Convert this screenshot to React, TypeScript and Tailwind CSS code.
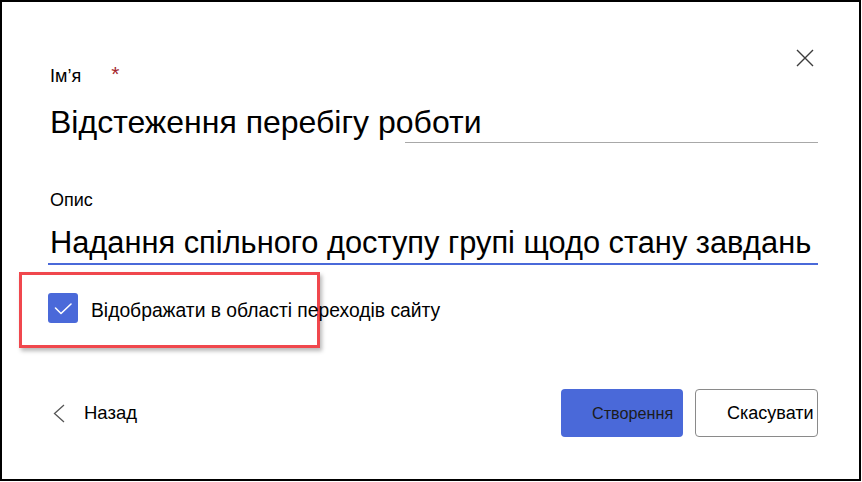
import React from "react";

export default function App() {
  return (
    <div
      className="w-[861px] h-[481px] border-2 border-black bg-white text-black overflow-hidden"
      style={{ fontFamily: '"Liberation Sans", Arial, sans-serif' }}
    >
      <div className="flex flex-col pl-[48px] pr-[41px]">
        {/* Header row: label + close */}
        <div className="flex justify-between pt-[47px]">
          <div className="mt-[16px] flex items-start text-[18px] leading-[22px]">
            <span>Ім’я</span>
            <span className="ml-[30px] text-[#a4262c] text-[21px] leading-[21px] -mt-[2px]">*</span>
          </div>
          <button className="w-[18px] h-[18px] mr-[4px]" aria-label="Закрити">
            <svg width="18" height="18" viewBox="0 0 18 18" fill="none">
              <path d="M1 1L17 17M17 1L1 17" stroke="#3c3c3c" strokeWidth="1.4" />
            </svg>
          </button>
        </div>

        {/* Name input */}
        <div className="flex flex-col mt-[16px]">
          <div className="text-[32px] leading-[39px] h-[39px] whitespace-nowrap">
            Відстеження перебігу роботи
          </div>
          <div className="ml-[355px] h-px bg-[#a8a8a8]" />
        </div>

        {/* Description label */}
        <div className="mt-[46px] text-[18px] leading-[22px]">Опис</div>

        {/* Description input */}
        <div className="mt-[12px] -ml-[2px] pl-[2px] border-b-2 border-[#4a69d9]">
          <div className="text-[30.8px] leading-[40px] h-[40px] whitespace-nowrap">
            Надання спільного доступу групі щодо стану завдань
          </div>
        </div>

        {/* Highlighted checkbox row */}
        <div className="mt-[7px] -ml-[31px] w-[301px] h-[76px] border-[3px] border-[#f0474d] shadow-[2px_3px_4px_rgba(0,0,0,0.28)] pl-[26px] pt-[18px]">
          <div className="flex items-start whitespace-nowrap">
            <div className="w-[30px] h-[30px] rounded-[3px] bg-[#4a69d9] flex items-center justify-center shrink-0">
              <svg width="30" height="30" viewBox="0 0 30 30" fill="none">
                <path d="M7.5 15L13 20.5L23 11" stroke="#ffffff" strokeWidth="1.6" strokeLinecap="round" strokeLinejoin="round" />
              </svg>
            </div>
            <span className="ml-[13px] mt-[6px] text-[19.3px] leading-[24px]">Відображати в області переходів сайту</span>
          </div>
        </div>

        {/* Footer */}
        <div className="mt-[41px] flex items-center justify-between">
          <button className="flex items-center">
            <svg width="12" height="19" viewBox="0 0 12 19" fill="none" className="ml-[3px]">
              <path d="M11 1L1.5 9.5L11 18" stroke="#555555" strokeWidth="1.3" />
            </svg>
            <span className="ml-[19px] text-[18.5px] leading-[22px]">Назад</span>
          </button>
          <div className="flex items-center gap-[12px]">
            <button className="w-[122px] h-[48px] rounded-[4px] bg-[#4a69d9] text-[#1c1c1c] text-[16.2px] text-left pl-[31px] whitespace-nowrap">
              Створення
            </button>
            <button className="w-[123px] h-[48px] rounded-[4px] border border-[#8a8a8a] bg-white text-black text-[18px] text-left pl-[31px] whitespace-nowrap overflow-hidden">
              Скасувати
            </button>
          </div>
        </div>
      </div>
    </div>
  );
}
